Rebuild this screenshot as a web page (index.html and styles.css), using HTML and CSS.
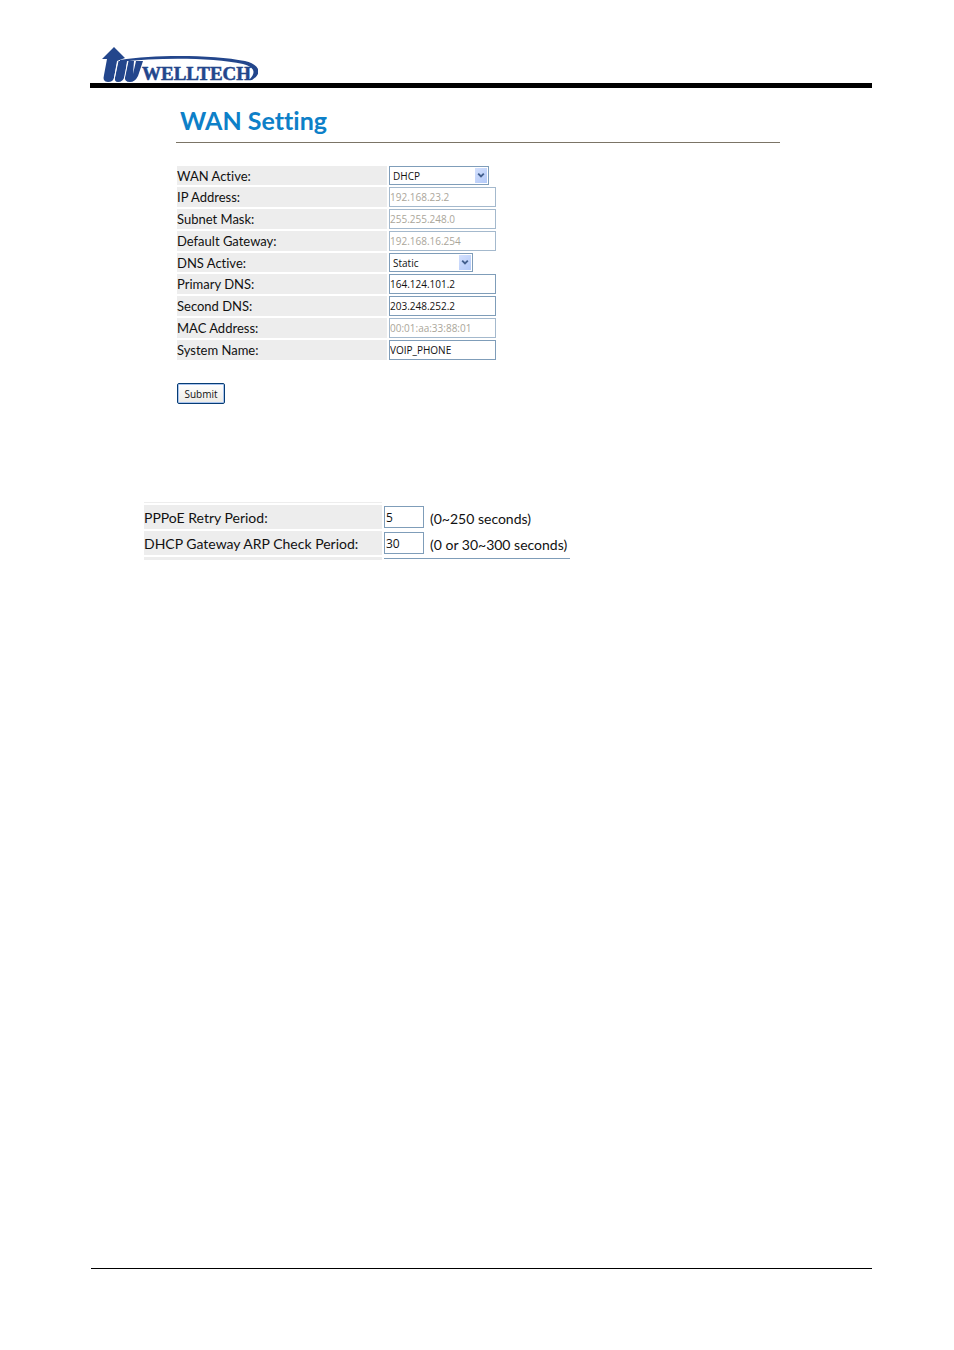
FILE: index.html
```html
<!DOCTYPE html>
<html lang="en">
<head>
<meta charset="utf-8">
<title>WAN Setting</title>
<link rel="stylesheet" href="styles.css">
</head>
<body>
<header class="page-header">
  <svg class="logo" viewBox="0 0 156 37" role="img" aria-label="Welltech">
    <g fill="#23468c">
      <path d="M12 1 L0 13 H5 L2 29 Q0 36 6 36 Q11 36 12 32 L15 15 L23 12 Z"/>
      <path d="M16 15 H25 L23 30 Q21 36 16 36 Q12 36 13 31 Z"/>
      <path d="M26 15 H32 L31 28 L34 15 H41 L36 30 Q33 36 28 36 Q22 36 23 30 Z"/>
      <path d="M18 14 C55 8 112 9 143 15 C159 19 160 28 150 34 L147 34 C155 26 152 21 141 18 C112 12 60 11 18 16 Z"/>
      <text class="logo-text" x="40" y="34">WELLTECH</text>
    </g>
    <path d="M16 15 L12 34 M26 15 L22 34" fill="none" stroke="#fff" stroke-width="1"/>
  </svg>
</header>
<main class="content">
  <form class="wan-form">
    <h1 class="title">WAN Setting</h1>
    <div class="fields">
      <div class="row row-select"><label class="label" for="wan">WAN Active:</label>
        <span class="select-box wide"><select id="wan" class="select"><option>DHCP</option></select><svg class="arrow" viewBox="0 0 12 16"><path d="M3 6 L6 9 L9 6"/></svg></span></div>
      <div class="row"><label class="label" for="ip">IP Address:</label><input class="input" id="ip" value="192.168.23.2" disabled></div>
      <div class="row"><label class="label" for="mask">Subnet Mask:</label><input class="input" id="mask" value="255.255.248.0" disabled></div>
      <div class="row"><label class="label" for="gw">Default Gateway:</label><input class="input" id="gw" value="192.168.16.254" disabled></div>
      <div class="row row-select"><label class="label" for="dns">DNS Active:</label>
        <span class="select-box"><select id="dns" class="select"><option>Static</option></select><svg class="arrow" viewBox="0 0 12 16"><path d="M3 6 L6 9 L9 6"/></svg></span></div>
      <div class="row"><label class="label" for="dns1">Primary DNS:</label><input class="input" id="dns1" value="164.124.101.2"></div>
      <div class="row"><label class="label" for="dns2">Second DNS:</label><input class="input" id="dns2" value="203.248.252.2"></div>
      <div class="row"><label class="label" for="mac">MAC Address:</label><input class="input" id="mac" value="00:01:aa:33:88:01" disabled></div>
      <div class="row"><label class="label" for="name">System Name:</label><input class="input" id="name" value="VOIP_PHONE"></div>
    </div>
    <button class="submit" type="button">Submit</button>
  </form>
  <section class="periods">
    <div class="period edge-top"><span class="period-label"></span></div>
    <div class="period"><label class="period-label" for="ppp">PPPoE Retry Period:</label><input class="period-input" id="ppp" value="5"><span class="hint">(0~250 seconds)</span></div>
    <div class="period"><label class="period-label" for="arp">DHCP Gateway ARP Check Period:</label><input class="period-input" id="arp" value="30"><span class="hint">(0 or 30~300 seconds)</span></div>
    <div class="period edge-bottom"><span class="period-label"></span><span class="cut-field"></span></div>
  </section>
</main>
<footer class="page-footer"></footer>
</body>
</html>
```
FILE: styles.css
```css
* { box-sizing: border-box; }
body {
  display: flex;
  flex-direction: column;
  min-height: 100vh;
  margin: 0;
  padding: 46px 82px 81px 90px;
  background: #fff;
  color: #111;
  font-family: "Trebuchet MS", Lato, sans-serif;
  font-variant-ligatures: none;
}
.page-header {
  display: flex;
  padding-left: 12px;
  border-bottom: 5px solid #000;
}
.logo { width: 156px; height: 37px; }
.logo-text { font: bold 19px "Liberation Serif", serif; stroke: #23468c; stroke-width: 0.5px; }
.content { flex: 1; }
.wan-form { margin: 0 92px 0 86px; }
.title {
  margin: 0;
  padding: 15px 0 0 4px;
  height: 55px;
  border-bottom: 1px solid #7b7466;
  color: #0d80c8;
  font-weight: bold;
  font-size: 25px;
  line-height: 34px;
}
.fields {
  display: grid;
  gap: 2px;
  margin: 23px 0 0 1px;
}
.row {
  display: grid;
  grid-template-columns: 210px 107px;
  grid-template-rows: 100%;
  column-gap: 2px;
  height: 20px;
}
.row-select { height: 19px; }
.label {
  background: #ededed;
  font-size: 13px;
  line-height: 20px;
  white-space: nowrap;
}
.input, .period-input {
  width: 100%;
  border: 1px solid #7f9db9;
  border-radius: 0;
  padding: 0 1px;
  background: #fff;
  color: #111;
  font: 10px "Open Sans", sans-serif;
}
.input { padding: 0; }
.input:disabled { border-color: #a4b9cd; color: #aaa69a; }
.select-box { position: relative; width: 84px; }
.wide { width: 100px; }
.select {
  display: block;
  width: 100%;
  height: 19px;
  appearance: none;
  border: 1px solid #7f9db9;
  border-radius: 0;
  padding: 0 3px;
  background: #fff;
  color: #111;
  font: 10px "Open Sans", sans-serif;
}
.arrow {
  position: absolute;
  top: 2px;
  right: 2px;
  width: 12px;
  height: 15px;
  background: linear-gradient(135deg, #d3e0fd, #b3c9f8);
  pointer-events: none;
}
.arrow path { fill: none; stroke: #435f8d; stroke-width: 2; }
.submit {
  display: block;
  width: 48px;
  height: 21px;
  margin: 23px 0 0 1px;
  border: 1px solid #063c74;
  border-radius: 2px;
  padding: 0;
  background: linear-gradient(#fff, #ecebe6);
  box-shadow: inset 0 0 0 1px #a9c4ee;
  color: #111;
  font: 10px/16px "Open Sans", sans-serif;
}
.periods {
  display: grid;
  gap: 2px;
  margin: 98px 0 0 54px;
}
.period {
  display: grid;
  grid-template-columns: 238px 40px 1fr;
  grid-template-rows: 100%;
  height: 24px;
  column-gap: 2px;
}
.period-label {
  background: #ededed;
  font-size: 14px;
  line-height: 25px;
  white-space: nowrap;
}
.period-input { height: 22px; margin-top: 1px; font-size: 12px; }
.hint { padding-left: 4px; font-size: 14px; line-height: 28px; }
.period.edge-top { height: 1px; }
.period.edge-bottom { grid-template-columns: 238px 186px; height: 3px; }
.cut-field { border-top: 1px solid #7f9db9; margin-top: 1px; }
.page-footer { border-top: 1px solid #000; margin-left: 1px; }
```
